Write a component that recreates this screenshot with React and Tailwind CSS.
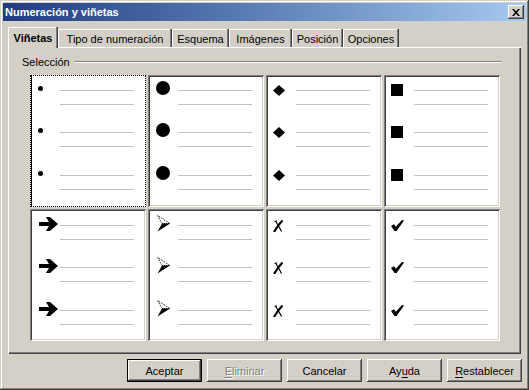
const FONT = { fontFamily: '"Liberation Sans", Arial, sans-serif' };

const raised = 'shadow-[inset_-1px_-1px_#404040,inset_1px_1px_#ffffff,inset_-2px_-2px_#808080,inset_2px_2px_#d4d0c8]';
const sunken = 'shadow-[inset_1px_1px_#808080,inset_-1px_-1px_#ffffff,inset_2px_2px_#404040,inset_-2px_-2px_#d4d0c8]';

const tabs = [
  { label: 'Tipo de numeración', w: 'w-[114px]' },
  { label: 'Esquema', w: 'w-[57px]' },
  { label: 'Imágenes', w: 'w-[63px]' },
  { label: 'Posición', w: 'w-[51px]' },
  { label: 'Opciones', w: 'w-[56px]' },
];

const Dot = () => <div className="ml-[6px] mt-[9px] size-[5px] rounded-full bg-black" />;
const Circle = () => <div className="ml-[6px] mt-[4px] size-[14px] rounded-full bg-black" />;
const Square = () => <div className="ml-[5px] mt-[7px] size-[12px] bg-black" />;

const Diamond = () => (
  <svg className="ml-[5px] mt-[8px]" width="12" height="11" viewBox="0 0 12 11">
    <polygon points="6,0 12,5.5 6,11 0,5.5" fill="#000" />
  </svg>
);

const Arrow = () => (
  <svg className="ml-[7px] mt-[6px]" width="19" height="14" viewBox="0 0 19 14">
    <path d="M0 5h10L7 0h4l8 7-8 7H7l3-5H0z" fill="#000" />
  </svg>
);

const ArrowHead = () => (
  <svg className="ml-[7px] mt-[4px]" width="14" height="17" viewBox="0 0 14 17">
    <path d="M0.5 0.5L13 8.5H5z" fill="none" stroke="#000" strokeWidth="1" strokeDasharray="1 1" />
    <path d="M5 8.5H13L0.5 16.5z" fill="#000" />
  </svg>
);

const Cross = () => (
  <svg className="ml-[5px] mt-[9px]" width="11" height="12" viewBox="0 0 11 12">
    <path d="M9.5 0.5C7 3 4 7 1 12" fill="none" stroke="#000" strokeWidth="2.2" />
    <path d="M2.5 1C4 3 6 7 8.5 11.5" fill="none" stroke="#000" strokeWidth="1.2" />
    <path d="M1.5 1.5L4 0.8" stroke="#000" strokeWidth="1" />
  </svg>
);

const Check = () => (
  <svg className="ml-[5px] mt-[9px]" width="13" height="11" viewBox="0 0 13 11">
    <path d="M0 6L3 4.2L4.8 6.8L11 0L13 0.6L5.6 11H3.6z" fill="#000" />
  </svg>
);

const Lines = ({ pt }) => (
  <div className={pt}>
    <div className="h-px w-[74px] bg-[#c0c0c0]" />
    <div className="mt-[13px] h-px w-[74px] bg-[#c0c0c0]" />
  </div>
);

const Cell = ({ Bullet, selected, row }) => {
  const pt = row === 1 ? 'pt-[13px]' : 'pt-[14px]';
  const groups = ['h-[42px]', 'h-[43px]', 'flex-1'];
  return (
    <div
      className={
        selected
          ? 'flex flex-col bg-white border border-dotted border-black p-px shadow-[inset_1px_0_#000]'
          : `flex flex-col bg-white p-[2px] ${sunken}`
      }
    >
      {groups.map((h, i) => (
        <div key={i} className={`flex ${h}`}>
          <div className="w-[28px] shrink-0">
            <Bullet />
          </div>
          <Lines pt={pt} />
        </div>
      ))}
    </div>
  );
};

const Button = ({ children, isDefault, disabled }) => (
  <div
    className={`flex h-[23px] w-[75px] items-center justify-center text-[11px] leading-[14px] ${
      isDefault
        ? 'border border-black shadow-[inset_-1px_-1px_#404040,inset_1px_1px_#ffffff,inset_-2px_-2px_#808080]'
        : raised
    } ${disabled ? 'text-[#808080] [text-shadow:1px_1px_0_#ffffff]' : 'text-black'}`}
  >
    {children}
  </div>
);

export default function App() {
  return (
    <div
      style={FONT}
      className="flex h-[390px] w-[529px] flex-col bg-[#d4d0c8] p-[3px] shadow-[inset_-1px_-1px_#404040,inset_1px_1px_#d4d0c8,inset_-2px_-2px_#808080,inset_2px_2px_#ffffff]"
    >
      {/* title bar */}
      <div className="flex h-[18px] items-center justify-between bg-gradient-to-r from-[#203c80] to-[#a6caf0] pl-[2px] pr-[2px]">
        <span className="text-[11px] font-bold leading-[14px] text-white">Numeración y viñetas</span>
        <div className={`flex h-[14px] w-[16px] items-center justify-center bg-[#d4d0c8] ${raised}`}>
          <svg width="8" height="7" viewBox="0 0 8 7">
            <path d="M0 0h2l2 2.5 2-2.5h2L5 3.5 8 7H6L4 4.5 2 7H0l3-3.5z" fill="#000" />
          </svg>
        </div>
      </div>

      {/* tabs */}
      <div className="mt-[6px] ml-[5px] flex h-[20px] items-end">
        <div className="relative z-10 -mb-px flex h-[21px] w-[50px] justify-center bg-[#d4d0c8] pt-[4px] text-[11px] font-bold leading-[14px] shadow-[inset_-1px_0_#404040,inset_-2px_0_#808080,inset_1px_1px_#ffffff]">
          Viñetas
        </div>
        {tabs.map((t) => (
          <div
            key={t.label}
            className={`flex h-[18px] ${t.w} justify-center pt-[3px] text-[11px] leading-[14px] shadow-[inset_-1px_0_#404040,inset_-2px_0_#808080,inset_1px_1px_#ffffff]`}
          >
            {t.label}
          </div>
        ))}
      </div>

      {/* panel */}
      <div className="ml-[5px] flex h-[307px] w-[513px] flex-col pt-[8px] pr-[19px] shadow-[inset_1px_1px_#ffffff,inset_-1px_-1px_#404040,inset_-2px_-2px_#808080]">
        <div className="flex h-[14px] items-center pl-[14px]">
          <span className="text-[11px] leading-[14px]">Selección</span>
          <div className="ml-[4px] h-0 flex-1 border-t border-b border-t-[#808080] border-b-white" />
        </div>
        <div className="mt-[6px] ml-[22px] grid grid-cols-[repeat(4,116px)] grid-rows-[repeat(2,132px)] gap-[2px]">
          <Cell Bullet={Dot} selected row={1} />
          <Cell Bullet={Circle} row={1} />
          <Cell Bullet={Diamond} row={1} />
          <Cell Bullet={Square} row={1} />
          <Cell Bullet={Arrow} row={2} />
          <Cell Bullet={ArrowHead} row={2} />
          <Cell Bullet={Cross} row={2} />
          <Cell Bullet={Check} row={2} />
        </div>
      </div>

      {/* buttons */}
      <div className="mt-[5px] flex justify-end gap-[5px] pr-[4px]">
        <Button isDefault>Aceptar</Button>
        <Button disabled>
          <span className="underline underline-offset-2">E</span>liminar
        </Button>
        <Button>Cancelar</Button>
        <Button>
          Ay<span className="underline underline-offset-2">u</span>da
        </Button>
        <Button>
          <span className="underline underline-offset-2">R</span>establecer
        </Button>
      </div>
    </div>
  );
}
